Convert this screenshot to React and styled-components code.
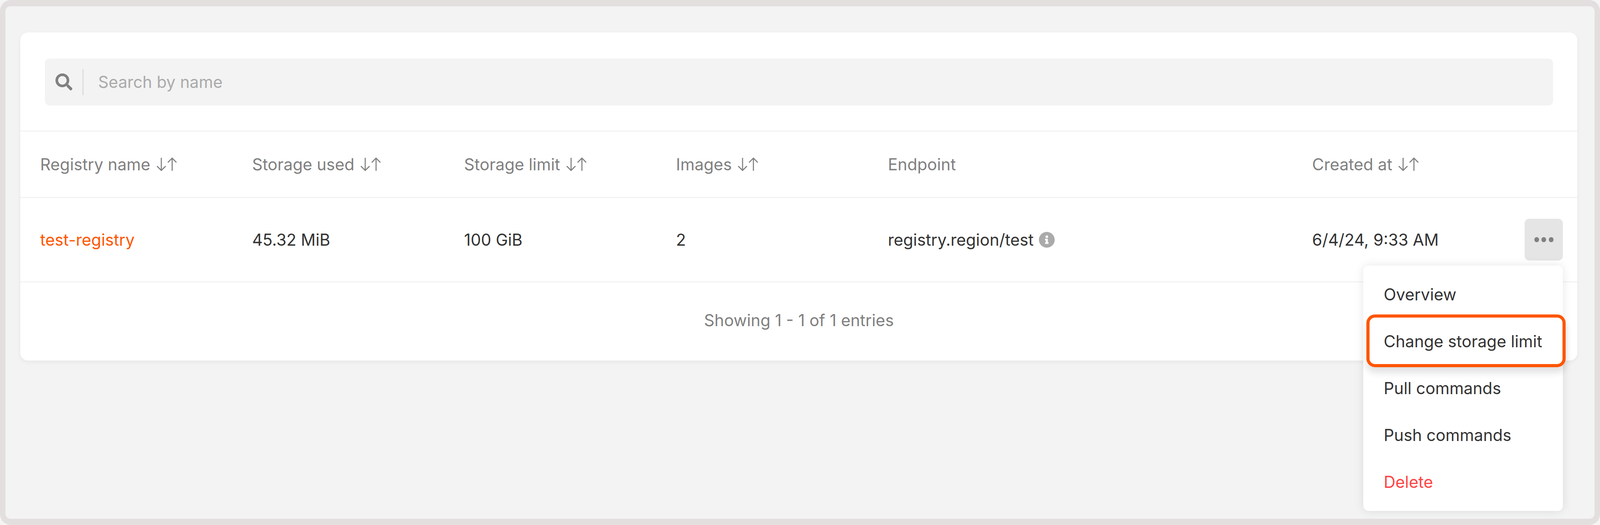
import React from 'react'
import styled, { createGlobalStyle } from 'styled-components'
import { FaSearch, FaInfoCircle } from 'react-icons/fa'

// widths and fonts follow the window width, the design is 4424 wide
const w = (n) => `${((n * 100) / 4424).toFixed(4)}vw`

const GlobalStyle = createGlobalStyle`
  html, body {
    margin: 0;
    padding: 0;
    background: #f4f4f4;
  }
  body {
    font-family: 'Inter', 'Liberation Sans', sans-serif;
    -webkit-font-smoothing: antialiased;
  }
`

const Frame = styled.div`
  box-sizing: border-box;
  width: 100%;
  height: 100vh;
  padding: 67px ${w(47)} 0 ${w(41)};
  background: #f3f3f3;
  border-style: solid;
  border-color: #e3dfdf;
  border-width: 16px ${w(16)};
  border-radius: 28px;
  overflow: hidden;
`

const Card = styled.div`
  background: #fff;
  border-radius: 20px;
  height: 840px;
  box-shadow: 0 4px 12px rgba(0, 0, 0, 0.05);
`

const SearchSection = styled.div`
  box-sizing: border-box;
  height: 254px;
  padding: 67px ${w(67)} 67px ${w(68)};
  border-bottom: 3px solid #f3f3f3;
`

const SearchBox = styled.div`
  height: 120px;
  display: flex;
  align-items: center;
  padding-left: ${w(29)};
  background: #f3f3f3;
  border-radius: 12px;
  color: #808080;

  svg {
    width: ${w(47)};
    height: ${w(47)};
  }
`

const Divider = styled.span`
  width: 3px;
  height: 67px;
  margin: 0 ${w(40)} 0 ${w(28)};
  background: #dcdcdc;
`

const Placeholder = styled.span`
  font-size: ${w(45)};
  color: #aaa;
`

const Row = styled.div`
  box-sizing: border-box;
  display: grid;
  grid-template-columns: ${w(586)} ${w(586)} ${w(586)} ${w(586)} ${w(1173)} 1fr;
  align-items: center;
  height: ${(p) => p.$height}px;
  padding-left: ${w(55)};
  border-bottom: 3px solid #f3f3f3;
  font-size: ${w(45)};
`

const HeadCell = styled.div`
  display: flex;
  align-items: center;
  gap: ${w(16)};
  color: #808080;
`

const BodyCell = styled.div`
  display: flex;
  align-items: center;
  color: ${(p) => p.$color || '#333'};
`

const InfoIcon = styled(FaInfoCircle)`
  width: ${w(45)};
  height: ${w(45)};
  margin-left: ${w(14)};
  color: #aaa;
`

const SortIcon = styled.svg`
  width: ${w(57)};
  height: ${w(38)};
`

const LastCell = styled.div`
  display: flex;
  align-items: center;
  justify-content: space-between;
  padding-right: ${w(40)};
  color: #333;
  white-space: nowrap;
`

const Actions = styled.div`
  position: relative;
`

const MoreButton = styled.button`
  display: flex;
  align-items: center;
  justify-content: center;
  gap: ${w(7)};
  width: ${w(106)};
  height: 107px;
  padding: 0;
  border: 0;
  border-radius: 12px;
  background: #e5e5e5;
`

const Dot = styled.span`
  width: ${w(13)};
  height: ${w(13)};
  border-radius: 50%;
  background: #808080;
`

const Menu = styled.div`
  position: absolute;
  top: calc(100% + 13px);
  right: 0;
  z-index: 2;
  box-sizing: border-box;
  width: ${w(552)};
  padding: 14px 0;
  background: #fff;
  border-radius: 14px;
  box-shadow: 0 0 24px rgba(0, 0, 0, 0.1);
`

const MenuItem = styled.div`
  position: relative;
  display: flex;
  align-items: center;
  height: 120px;
  padding-left: ${w(56)};
  font-size: ${w(45)};
  color: ${(p) => (p.$danger ? '#ff4444' : '#333')};

  ${(p) =>
    p.$highlighted &&
    `
    &::after {
      content: '';
      position: absolute;
      top: -9px;
      right: ${w(-7)};
      bottom: -6px;
      left: ${w(8)};
      border: 8px solid #ff5500;
      border-radius: 22px;
      box-shadow: 0 14px 18px rgba(0, 0, 0, 0.12);
    }
  `}
`

const Footer = styled.div`
  display: flex;
  align-items: center;
  justify-content: center;
  height: 193px;
  font-size: ${w(45)};
  color: #808080;
`

function SortArrows() {
  return (
    <SortIcon viewBox="0 0 57 38" fill="none" stroke="#808080" strokeWidth="3">
      <path d="M14 1V36M2 24L14 36L26 24" />
      <path d="M44 37V2M32 14L44 2L56 14" />
    </SortIcon>
  )
}

const columns = [
  { label: 'Registry name', sortable: true },
  { label: 'Storage used', sortable: true },
  { label: 'Storage limit', sortable: true },
  { label: 'Images', sortable: true },
  { label: 'Endpoint', sortable: false },
  { label: 'Created at', sortable: true },
]

export default function App() {
  return (
    <>
      <GlobalStyle />
      <Frame>
        <Card>
          <SearchSection>
            <SearchBox>
              <FaSearch />
              <Divider />
              <Placeholder>Search by name</Placeholder>
            </SearchBox>
          </SearchSection>
          <Row $height={170}>
            {columns.map((col) => (
              <HeadCell key={col.label}>
                {col.label}
                {col.sortable && <SortArrows />}
              </HeadCell>
            ))}
          </Row>
          <Row $height={216}>
            <BodyCell $color="#ff5500">test-registry</BodyCell>
            <BodyCell>45.32 MiB</BodyCell>
            <BodyCell>100 GiB</BodyCell>
            <BodyCell>2</BodyCell>
            <BodyCell>
              registry.region/test
              <InfoIcon />
            </BodyCell>
            <LastCell>
              6/4/24, 9:33 AM
              <Actions>
                <MoreButton>
                  <Dot />
                  <Dot />
                  <Dot />
                </MoreButton>
                <Menu>
                  <MenuItem>Overview</MenuItem>
                  <MenuItem $highlighted>Change storage limit</MenuItem>
                  <MenuItem>Pull commands</MenuItem>
                  <MenuItem>Push commands</MenuItem>
                  <MenuItem $danger>Delete</MenuItem>
                </Menu>
              </Actions>
            </LastCell>
          </Row>
          <Footer>Showing 1 - 1 of 1 entries</Footer>
        </Card>
      </Frame>
    </>
  )
}
